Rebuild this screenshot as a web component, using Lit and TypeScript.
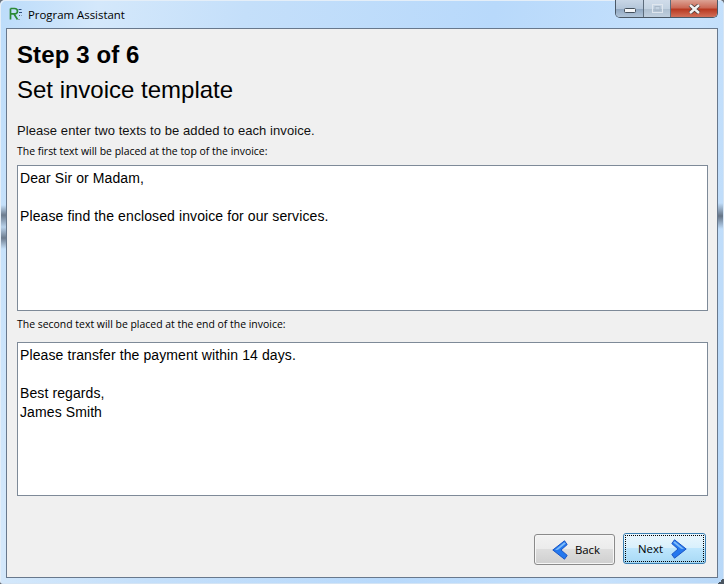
import { LitElement, html, css } from "lit";
import { customElement } from "lit/decorators.js";

@customElement("app-root")
export class AppRoot extends LitElement {
  static styles = css`
    :host { display: block; width: 724px; height: 584px; background: #6a727c; overflow: hidden; }
    .window {
      position: relative; box-sizing: border-box; width: 724px; height: 584px;
      display: flex; flex-direction: column; padding: 0 6px 6px;
      border-radius: 5px 5px 4px 4px;
      background: linear-gradient(100deg, #bcdcfa 0%, #d4e8fb 12%, #c4dffa 30%, #b8d9fb 60%, #c6e1fc 85%, #b8d8f8 100%);
      font-family: "Liberation Sans", Arial, sans-serif; color: #000;
      box-shadow: inset 1px 1px 0 #e4eef8, inset -1px -1px 0 #d4e4f4;
    }
    .glow { position: absolute; width: 5px; }
    .glow-l {
      left: 1px; top: 205px; height: 44px;
      background: linear-gradient(rgba(70,80,95,0), rgba(70,80,95,.7) 23%, rgba(70,80,95,.1) 50%, rgba(70,80,95,.7) 75%, rgba(70,80,95,0));
    }
    .glow-r {
      right: 1px; top: 203px; height: 26px;
      background: linear-gradient(rgba(70,80,95,0), rgba(70,80,95,.75) 50%, rgba(70,80,95,0));
    }
    .grip { position: absolute; right: 0; bottom: 0; width: 6px; height: 6px; background: linear-gradient(135deg, transparent 50%, #4a5560 50%); }
    .titlebar { height: 28px; flex: none; display: flex; align-items: flex-start; }
    .app-icon { width: 14px; height: 14px; margin: 7px 0 0 3px; }
    .title { font: 11.4px/16px "Open Sans", "Noto Sans", sans-serif; margin: 7px 0 0 5px; color: #000; }
    .controls {
      margin-left: auto; display: flex; height: 18px; box-sizing: border-box;
      border: 1px solid #4a5866; border-top: none; border-radius: 0 0 5px 5px; overflow: hidden;
    }
    .ctl { height: 17px; display: flex; align-items: center; justify-content: center; box-sizing: border-box; }
    .min { width: 28px; background: linear-gradient(#c8d6e6 0, #b4c6da 50%, #8fa6c0 52%, #b0c4d8 100%); border-right: 1px solid #5d6c7c; align-items: flex-end; padding-bottom: 4px; }
    .max { width: 27px; background: linear-gradient(#d0dcea 0, #c4d3e2 50%, #aebfd0 52%, #c0cfde 100%); border-right: 1px solid #5d6c7c; }
    .close { width: 46px; background: linear-gradient(#dca294 0, #cb6a57 45%, #b83a22 55%, #d2705a 100%); }
    .panel {
      flex: 1; box-sizing: border-box; background: #f0f0f0; border: 1px solid #68788c;
      padding: 12px 9px 12px 10px; display: flex; flex-direction: column;
    }
    h1 { margin: 0; font-size: 24px; line-height: 28px; font-weight: 700; letter-spacing: 0.1px; }
    h2 { margin: 7px 0 0; font-size: 24px; line-height: 28px; font-weight: 400; }
    .intro { margin: 19px 0 0; font-size: 13px; line-height: 16px; letter-spacing: 0.07px; color: #111; }
    .lbl { margin: 5px 0 0; font: 10.45px/15px "Open Sans", "Noto Sans", sans-serif; color: #000; height: 15px; }
    .box {
      box-sizing: border-box; background: #fff; border: 1px solid #7e8a98; margin-top: 6px;
      padding: 3px 2px; font-size: 14px; line-height: 19px; white-space: pre-line; letter-spacing: 0.1px;
    }
    .b1 { height: 146px; }
    .b2 { height: 154px; margin-top: 10px; }
    .lbl2 { margin-top: 6px; }
    .footer { margin: auto 2px 0 0; display: flex; justify-content: flex-end; align-items: flex-start; gap: 8px; }
    button {
      box-sizing: border-box; padding: 0; display: flex; align-items: center; justify-content: center;
      font: 11.4px "Open Sans", "Noto Sans", sans-serif; color: #000;
    }
    .back {
      width: 81px; height: 31px; margin-top: 1px; gap: 7px; padding-left: 3px; border: 1px solid #8a8a8a; border-radius: 3px;
      background: linear-gradient(#f2f2f2 0, #ebebeb 48%, #dddddd 50%, #cfcfcf 100%);
      box-shadow: inset 0 0 0 1px #f6f6f6;
    }
    .next {
      width: 83px; height: 31px; gap: 8px; padding-right: 4px; border: 1px solid #3c7fb1; border-radius: 3px; position: relative;
      background: linear-gradient(#eaf6fd 0, #d9f0fc 48%, #bee6fd 50%, #a7d9f5 100%);
    }
    .next::after { content: ""; position: absolute; inset: 1px; border: 1px dotted #000; }
    .arrow { width: 16px; height: 20px; display: block; }
    .chev { fill: #2478ee; stroke: #1a55c4; stroke-width: 1; stroke-linejoin: round; }
    .shine { fill: #7fbcfa; }
  `;

  render() {
    return html`
      <div class="window">
        <div class="titlebar">
          <svg class="app-icon" viewBox="0 0 14 14">
            <path d="M1.5 1.5v11M1.5 1.5h4q3 0 3 2.7t-3 2.7h-4M5 7l3.5 5.5" fill="none" stroke="#2c8a36" stroke-width="1.7"/>
            <path d="M9.5 2.5h3M10 5.5h3" stroke="#2f4f7f" stroke-width="1"/>
            <path d="M10 8.5h2.5M9.5 12.5h2" stroke="#5a6068" stroke-width="1" stroke-dasharray="1 1"/>
          </svg>
          <span class="title">Program Assistant</span>
          <div class="controls">
            <div class="ctl min">
              <svg width="12" height="5" viewBox="0 0 12 5"><rect x="0.5" y="0.5" width="11" height="4" rx="1" fill="#f4f6f8" stroke="#44505c"/></svg>
            </div>
            <div class="ctl max">
              <svg width="11" height="9" viewBox="0 0 11 9"><rect x="0.5" y="0.5" width="10" height="8" fill="none" stroke="#dfe6ee"/><rect x="3" y="2.5" width="5" height="4" fill="none" stroke="#a9b8c8"/></svg>
            </div>
            <div class="ctl close">
              <svg width="13" height="10" viewBox="0 0 13 10"><path d="M2 1l9 8M11 1L2 9" stroke="#4b3a38" stroke-width="4"/><path d="M2 1l9 8M11 1L2 9" stroke="#f2f2f2" stroke-width="2.4"/></svg>
            </div>
          </div>
        </div>
        <div class="panel">
          <h1>Step 3 of 6</h1>
          <h2>Set invoice template</h2>
          <p class="intro">Please enter two texts to be added to each invoice.</p>
          <div class="lbl">The first text will be placed at the top of the invoice:</div>
          <div class="box b1">Dear Sir or Madam,

Please find the enclosed invoice for our services.</div>
          <div class="lbl lbl2">The second text will be placed at the end of the invoice:</div>
          <div class="box b2">Please transfer the payment within 14 days.

Best regards,
James Smith</div>
          <div class="footer">
            <button class="back">
              <svg class="arrow" viewBox="0 0 16 20">
                <path class="chev" d="M12.5 .8L.8 10l11.7 9.2 2.7-3.8L9 10l6.2-5.4z"/>
                <path class="shine" d="M12.3 2.2L3 10l3-.3 7.8-6.2z"/>
              </svg>
              Back
            </button>
            <button class="next">
              Next
              <svg class="arrow" viewBox="0 0 16 20">
                <path class="chev" d="M3.5 .8L15.2 10 3.5 19.2.8 15.4 7 10 .8 4.6z"/>
                <path class="shine" d="M3.7 2.2L13 10l-3-.3L2.2 3.5z"/>
              </svg>
            </button>
          </div>
        </div>
        <div class="glow glow-l"></div>
        <div class="glow glow-r"></div>
        <div class="grip"></div>
      </div>
    `;
  }
}
